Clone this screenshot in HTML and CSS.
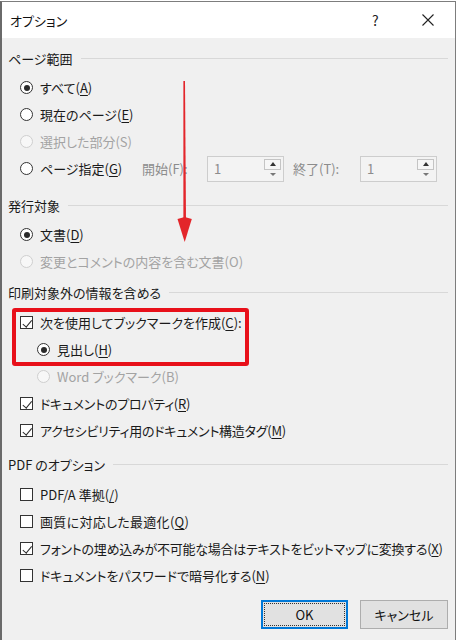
FILE: index.html
```html
<!DOCTYPE html>
<html lang="ja">
<head>
<meta charset="utf-8">
<title>オプション</title>
<link rel="stylesheet" href="styles.css">
</head>
<body>
<div class="dialog">
  <div class="titlebar">
    <span class="title">オプション</span>
    <span class="help">?</span>
    <span class="close"><svg width="12" height="12" viewBox="0 0 12 12"><path d="M0.5 0.5L11.5 11.5M11.5 0.5L0.5 11.5" stroke="#222" stroke-width="1.1" fill="none"/></svg></span>
  </div>
  <div class="content">
    <section class="group">
      <div class="group-head"><span>ページ範囲</span></div>
      <div class="row"><span class="radio checked"></span><span>すべて(<u>A</u>)</span></div>
      <div class="row"><span class="radio"></span><span>現在のページ(<u>E</u>)</span></div>
      <div class="row disabled"><span class="radio"></span><span>選択した部分(S)</span></div>
      <div class="row"><span class="radio"></span><span class="spec-label">ページ指定(<u>G</u>)</span>
        <span class="field-label first">開始(F):</span>
        <span class="spin"><span class="spin-val">1</span><span class="spin-btns"><span class="spin-up"></span><span class="spin-down"></span></span></span>
        <span class="field-label">終了(T):</span>
        <span class="spin"><span class="spin-val">1</span><span class="spin-btns"><span class="spin-up"></span><span class="spin-down"></span></span></span>
      </div>
    </section>
    <section class="group g2">
      <div class="group-head"><span>発行対象</span></div>
      <div class="row"><span class="radio checked"></span><span>文書(<u>D</u>)</span></div>
      <div class="row disabled"><span class="radio"></span><span>変更とコメントの内容を含む文書(O)</span></div>
    </section>
    <section class="group g3">
      <div class="group-head"><span>印刷対象外の情報を含める</span></div>
      <div class="row"><span class="checkbox checked"></span><span>次を使用してブックマークを作成(<u>C</u>):</span></div>
      <div class="row sub"><span class="radio checked"></span><span>見出し(<u>H</u>)</span></div>
      <div class="row sub disabled"><span class="radio"></span><span>Word ブックマーク(B)</span></div>
      <div class="row"><span class="checkbox checked"></span><span class="tight">ドキュメントのプロパティ(<u>R</u>)</span></div>
      <div class="row"><span class="checkbox checked"></span><span class="tight">アクセシビリティ用のドキュメント構造タグ(<u>M</u>)</span></div>
    </section>
    <section class="group g4">
      <div class="group-head"><span>PDF のオプション</span></div>
      <div class="row"><span class="checkbox"></span><span>PDF/A 準拠(<u>/</u>)</span></div>
      <div class="row"><span class="checkbox"></span><span class="wide">画質に対応した最適化(<u>Q</u>)</span></div>
      <div class="row"><span class="checkbox checked"></span><span class="tight">フォントの埋め込みが不可能な場合はテキストをビットマップに変換する(<u>X</u>)</span></div>
      <div class="row"><span class="checkbox"></span><span>ドキュメントをパスワードで暗号化する(<u>N</u>)</span></div>
    </section>
    <div class="buttons">
      <button class="btn default"><span class="focus">OK</span></button>
      <button class="btn">キャンセル</button>
    </div>
  </div>
  <svg class="arrow" width="20" height="166" viewBox="0 0 20 166"><polygon points="8.4,2 10,2 11,142 8.4,142" fill="#e3262b"/><polygon points="9.7,138 2.5,140 9.7,163 16.8,140" fill="#e3262b"/></svg>
  <div class="highlight"></div>
</div>
</body>
</html>
```
FILE: styles.css
```css
* { box-sizing: border-box; }
html, body { margin: 0; padding: 0; background: #fff; }
body {
  font-family: "Noto Sans CJK JP", "Noto Sans", sans-serif;
  font-size: 13px;
  color: #1a1a1a;
  font-feature-settings: "palt";
}
.dialog {
  position: relative;
  width: 456px;
  height: 640px;
  margin-top: 1px;
  border: 1px solid #7d7d7d;
  border-bottom: none;
  border-left: 2px solid #6a6a6a;
  background: #f0f0f0;
  overflow: hidden;
}
.titlebar {
  height: 36px;
  background: #fff;
  display: flex;
  align-items: center;
  padding-left: 8px;
}
.title { font-size: 13px; color: #111; flex: 1; }
.help { width: 10px; font-size: 14px; color: #222; margin-right: 40px; }
.close { width: 33px; display: flex; }
.content { padding: 10px 7px 0 6px; }
.group-head {
  height: 20px;
  display: flex;
  align-items: center;
  color: #1a1a1a;
}
.group-head::after {
  content: "";
  flex: 1;
  height: 1px;
  background: #d8d8d8;
  margin-left: 8px;
}
.group-head + .row { margin-top: 6px; }
.g2 { margin-top: 13px; }
.g3 { margin-top: 7px; }
.g3 .group-head + .row { margin-top: 7px; }
.g4 { margin-top: 10px; }
.g4 .group-head + .row { margin-top: 7px; }
.row {
  height: 27px;
  display: flex;
  align-items: center;
  padding-left: 12px;
  white-space: nowrap;
}
.row.sub { padding-left: 29px; }
.row.disabled { color: #a3a3a3; }
.tight { letter-spacing: -0.25px; }
.wide { letter-spacing: 0.3px; }
.radio {
  position: relative;
  flex: none;
  width: 13px;
  height: 13px;
  border: 1px solid #333;
  border-radius: 50%;
  background: #fff;
  margin-right: 7px;
}
.radio.checked::after {
  content: "";
  position: absolute;
  inset: 2.5px;
  border-radius: 50%;
  background: #2a2a2a;
}
.disabled .radio { border-color: #cfcfcf; background: #f7f7f7; }
.checkbox {
  position: relative;
  flex: none;
  width: 13px;
  height: 13px;
  border: 1px solid #333;
  background: #fff;
  margin-right: 7px;
}
.checkbox.checked::after {
  content: "";
  position: absolute;
  left: 3.5px;
  top: 0.5px;
  width: 3.5px;
  height: 7.5px;
  border: solid #2a2a2a;
  border-width: 0 1.3px 1.3px 0;
  transform: rotate(40deg);
}
u { text-decoration-thickness: 1px; text-underline-offset: 2px; }
.spec-label { width: 102px; flex: none; }
.field-label { color: #8c8c8c; margin-left: 9px; width: 67px; flex: none; }
.field-label.first { margin-left: 0; width: 65px; }
.spin {
  display: flex;
  flex: none;
  width: 77px;
  height: 26px;
  border: 1px solid #cdcdcd;
  background: #f3f3f3;
}
.spin-val { flex: 1; color: #8c8c8c; padding-left: 6px; line-height: 24px; font-size: 13px; }
.spin-btns {
  width: 19px;
  display: flex;
  flex-direction: column;
  padding: 2px 2px 2px 0;
}
.spin-up, .spin-down {
  flex: 1;
  position: relative;
}
.spin-up { border: 1px solid #c4c4c4; background: #f6f6f6; }
.spin-up::after, .spin-down::after {
  content: "";
  position: absolute;
  left: 50%;
  top: 50%;
  margin-left: -3px;
  border-left: 3px solid transparent;
  border-right: 3px solid transparent;
}
.spin-up::after { border-bottom: 4px solid #333; margin-top: -2.5px; }
.spin-down::after { border-top: 3px solid #777; margin-top: -1px; }
.buttons {
  display: flex;
  justify-content: flex-end;
  gap: 12px;
  margin-top: 11px;
  padding-right: 0;
}
.btn {
  width: 88px;
  height: 29px;
  border: 1px solid #adadad;
  background: #e1e1e1;
  font-family: inherit;
  font-size: 13px;
  color: #111;
  padding: 0;
  font-feature-settings: "palt";
}
.btn.default { border: 2px solid #0078d7; width: 87px; padding: 1px; }
.btn .focus {
  display: flex;
  align-items: center;
  justify-content: center;
  height: 100%;
  border: 1px dotted #333;
}
.arrow { position: absolute; left: 173px; top: 77px; }
.highlight {
  position: absolute;
  left: 10px;
  top: 306px;
  width: 237px;
  height: 58px;
  border: 4px solid #e8101a;
  border-radius: 3px;
}
```
